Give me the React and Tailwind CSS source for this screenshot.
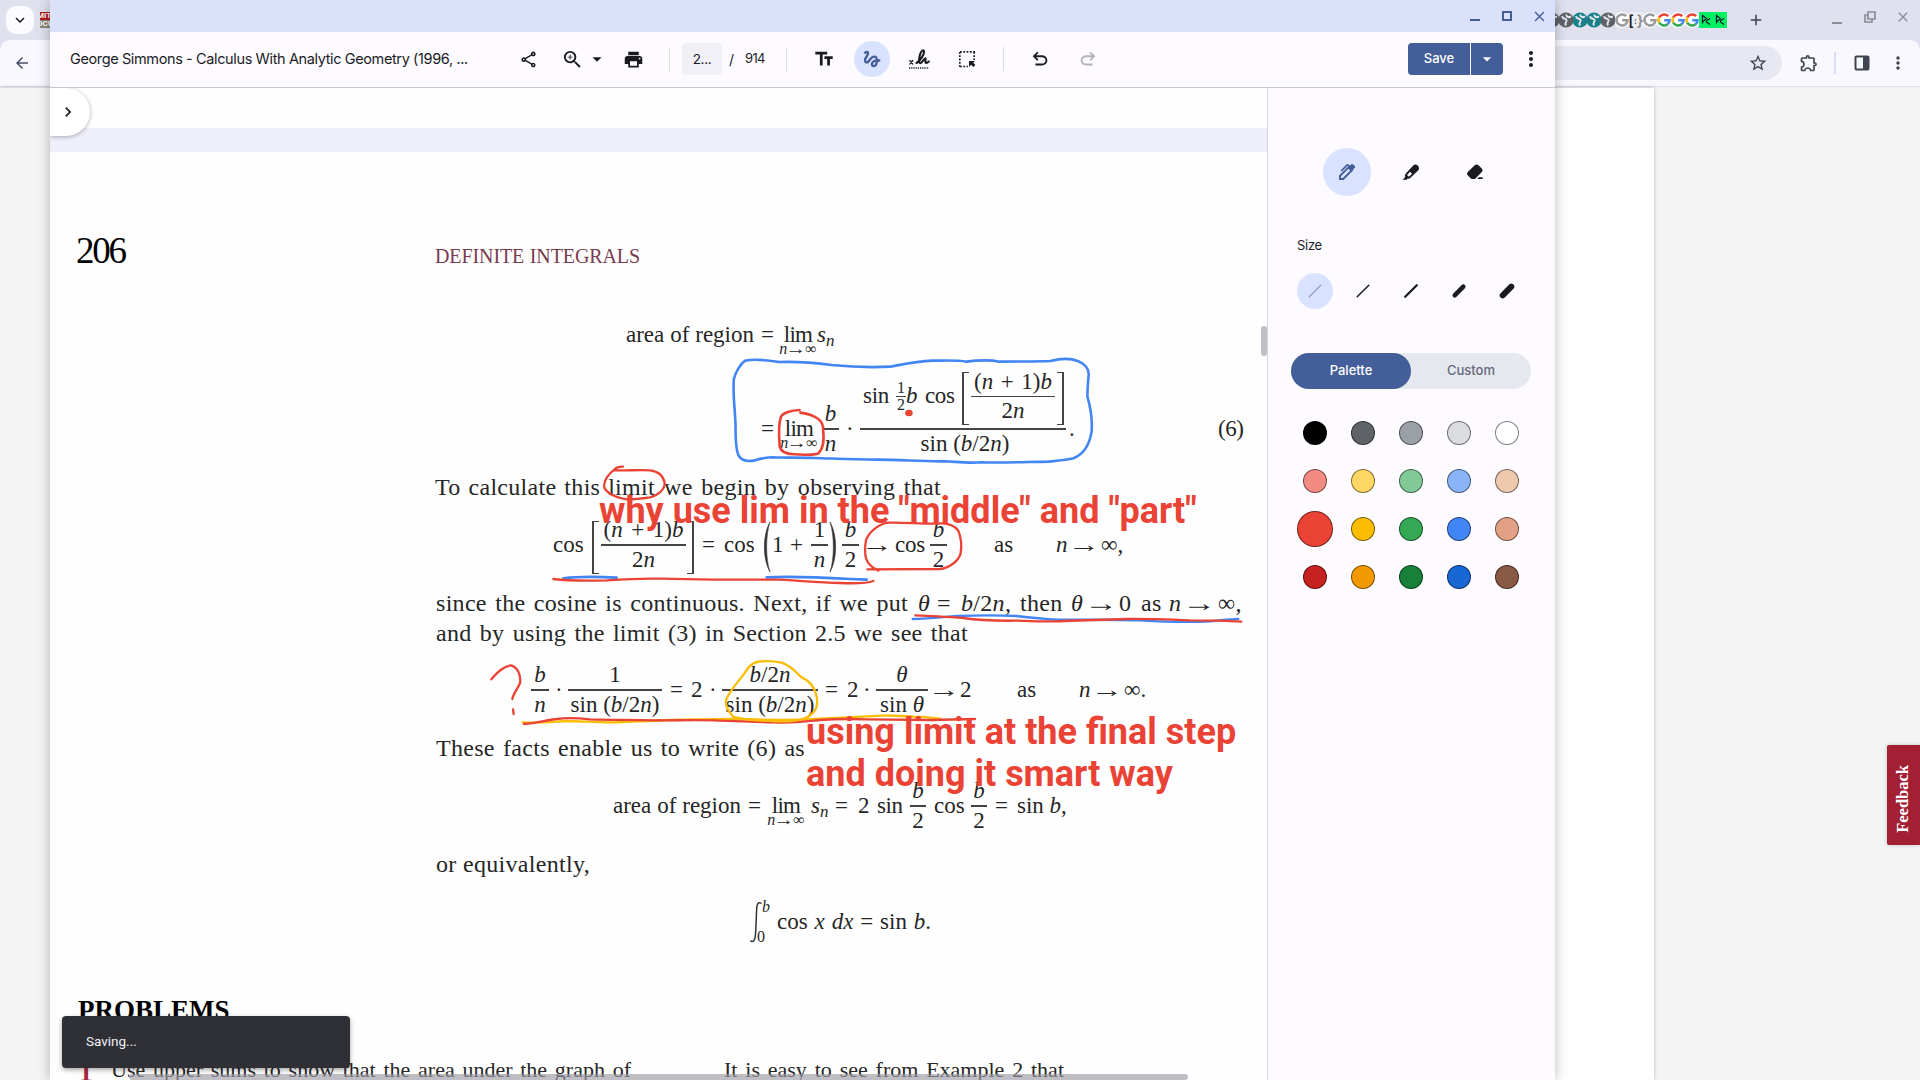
import React from "react";
import {
  MdOutlineShare, MdZoomIn, MdPrint, MdArrowDropDown, MdTextFields, MdMoreVert, MdGesture,
  MdStarBorder, MdOutlineExtension, MdArrowBack, MdAdd, MdClose, MdChevronRight, MdExpandMore,
} from "react-icons/md";

/* ---------- math typesetting helpers ---------- */
const T = ({ c = "", children }) => (
  <span className={`block shrink-0 whitespace-nowrap [text-align-last:justify] ${c}`}>{children}</span>
);
const Row = ({ c = "", children }) => <div className={`flex h-[26px] shrink-0 items-center ${c}`}>{children}</div>;
const I = ({ children }) => <i className="italic">{children}</i>;
const Arrow = ({ c = "" }) => (
  <span className={`flex w-[23px] shrink-0 justify-center tracking-normal ${c}`}><span className="block scale-x-[1.4]">→</span></span>
);
const Frac = ({ c = "", n, d, nc = "" }) => (
  <span className={`flex shrink-0 flex-col items-center whitespace-nowrap leading-[28px] ${c}`}>
    <span className={`block h-[28px] ${nc}`}>{n}</span>
    <span className="block h-[1.5px] w-full bg-[#444]" />
    <span className="block h-[28px]">{d}</span>
  </span>
);
const Lim = ({ c = "" }) => (
  <span className={`flex h-[26px] w-[28px] shrink-0 flex-col items-center whitespace-nowrap ${c}`}>
    <span className="block h-[26px] leading-[26px] tracking-[-0.8px]">lim</span>
    <span className="-mt-[7px] flex text-[16px] leading-[16px]"><I>n</I><span className="mx-[1px] block scale-x-[1.3]">→</span>∞</span>
  </span>
);
const Sn = ({ c = "" }) => (
  <T c={`w-[16px] ${c}`}><I>s</I><span className="inline-block translate-y-[4px] text-[17px] italic leading-none">n</span></T>
);
const LB = ({ c = "" }) => <span className={`block h-[53px] w-[7px] shrink-0 border-y-[1.5px] border-l-[2px] border-[#444] ${c}`} />;
const RB = ({ c = "" }) => <span className={`block h-[53px] w-[7px] shrink-0 border-y-[1.5px] border-r-[2px] border-[#444] ${c}`} />;
const Paren = ({ c = "" }) => (
  <svg className={`block h-[52px] w-[8px] shrink-0 ${c}`} viewBox="0 0 8 52"><path d="M7 1C-.5 14-.5 38 7 51C2.5 38 2.5 14 7 1Z" fill="#333" stroke="#333" strokeWidth=".6" /></svg>
);

/* ---------- icons ---------- */
const Sym = ({ d, c }) => <svg viewBox="0 -960 960 960" className={c} fill="currentColor"><path d={d} /></svg>;
const UNDO = "M280-200v-80h284q63 0 109.5-40T720-420q0-60-46.5-100T564-560H312l104 104-56 56-200-200 200-200 56 56-104 104h252q97 0 166.5 63T800-420q0 94-69.5 157T564-200H280Z";
const REDO = "M396-200q-97 0-166.5-63T160-420q0-94 69.5-157T396-640h252L544-744l56-56 200 200-200 200-56-56 104-104H396q-63 0-109.5 40T240-420q0 60 46.5 100T396-280h284v80H396Z";

const Signature = () => (
  <svg viewBox="0 0 22 20" className="h-5 w-[22px]" fill="none" stroke="#1b1b1f" strokeLinecap="round">
    <path d="M1.800 11.500l3 3.600M4.800 11.500l-3 3.600" strokeWidth="1.200" />
    <path d="M8.500 14C12 12 16.400 5.500 16 2.400C15.600.2 13 1.800 12 5.500C11 9.500 10.400 14.200 12.400 14.200C14 14.200 15.400 10.400 17.400 9.400C18 10.800 16.600 14 18.400 14C19.400 14 20 13.400 20.800 12.600" strokeWidth="2.100" />
    <path d="M1 19H21" strokeWidth="1.300" strokeLinecap="butt" strokeDasharray="1.200 1" />
  </svg>
);
const Select = () => (
  <svg viewBox="0 0 18 18" className="size-[18px]" fill="none" stroke="#1b1b1f">
    <path d="M2 1.800H17M2 16.500H10M1.800 2V17M16.200 2V10" strokeWidth="1.700" strokeDasharray="1.800 1.500" />
    <path d="M11 11H17L15.200 12.800L17.400 15L15.400 17L13 14.800L11 17Z" fill="#1b1b1f" stroke="none" />
  </svg>
);
const Pen = () => (
  <svg viewBox="0 0 18 18" className="size-[18px]" fill="none" stroke="#435e99">
    <path d="M2 16V12.800L10.800 4L14 7.200L5.200 16Z" strokeWidth="1.900" />
    <path d="M10 4.800L13.200 1.800Q14.200 1 15.300 2L16.300 3Q17.100 4 16.300 5L13.200 8Z" fill="#435e99" strokeWidth="1" />
    <path d="M3.200 8L8.700 2.300Q9.400 1.700 10.200 2.300L11.500 3.500" strokeWidth="1.700" />
  </svg>
);
const Marker = () => (
  <svg viewBox="0 0 18 18" className="size-[18px]">
    <path d="M.6 16.800L3.200 14Q2.400 12 3.800 10.500L11.500 2.300Q13.500.6 15.700 2.400Q18 4.800 16.400 7.200L8.500 14.800Q6.800 16.200 5.600 15.600L4.800 16.800Z" fill="#1b1b1f" />
    <path d="M5 11.900L8 8.800L10 10.800L7 13.800Z" fill="#fdfbff" />
  </svg>
);
const Eraser = () => (
  <svg viewBox="0 0 18 18" className="size-[18px]" fill="#1b1b1f">
    <path d="M1.500 9.200L9 2Q10.800.8 12.200 2L16 5.800Q17.400 7.400 16 8.800L9 16H5.300L1.500 12Q.3 10.600 1.500 9.200Z" />
    <path d="M11 16L13 14.200H16.600V16Z" />
  </svg>
);
const Stroke = ({ w, color }) => (
  <svg viewBox="0 0 18 18" className="size-[18px]"><path d="M3.200 14.800L14.800 3.200" stroke={color} strokeWidth={w} strokeLinecap="round" /></svg>
);
const FatStroke = ({ w }) => (
  <svg viewBox="0 0 18 18" className="size-[18px]"><path d="M4.700 13.300L13.300 4.700" stroke="#1b1b1f" strokeWidth={w} strokeLinecap="round" /></svg>
);

/* ---------- favicons ---------- */
const Fav = ({ c, children }) => <span className={`flex h-4 w-[14px] shrink-0 items-center justify-center overflow-hidden ${c}`}>{children}</span>;
const Globe = ({ color }) => (
  <svg viewBox="0 0 16 16" className="size-4 shrink-0"><circle cx="8" cy="8" r="7.600" fill={color} /><path d="M4 4.200Q4.500 6.500 7.500 7Q9.500 8 8 10Q7 11.500 8 13.500M8.500 2.500Q8 5 11 5.200L13 4.500" stroke="#e6e7ee" strokeWidth="1.900" fill="none" /></svg>
);
const G = ({ gray }) => {
  const k = gray ? ["#9a9a9a", "#9a9a9a", "#9a9a9a", "#9a9a9a"] : ["#ea4335", "#fbbc04", "#34a853", "#4285f4"];
  return (
    <svg viewBox="0 0 16 16" className="size-4 shrink-0" fill="none" strokeWidth="2.600">
      <circle cx="8" cy="8" r="8" fill="#fff" />
      <path d="M12.200 4.200A5.600 5.600 0 0 0 3.200 5.400" stroke={k[0]} /><path d="M3.200 5.400A5.600 5.600 0 0 0 3.200 10.600" stroke={k[1]} />
      <path d="M3.200 10.600A5.600 5.600 0 0 0 11.600 12.200" stroke={k[2]} /><path d="M11.600 12.200A5.600 5.600 0 0 0 13.500 8.300H8.200" stroke={k[3]} />
    </svg>
  );
};
const DC = () => (
  <Fav c="bg-[#03ef62]"><svg viewBox="0 0 14 16" className="h-4 w-[14px]" fill="none" stroke="#05192d" strokeWidth="1.200"><path d="M3.500 11.500V3.500L7.500 6.500L3.500 10M11 6.500L7.500 8.500V10L11 12.500" /></svg></Fav>
);

const SWATCHES = [
  "bg-black", "bg-[#5f6368]", "bg-[#9aa0a6]", "bg-[#dadce0]", "bg-white",
  "bg-[#f28b82]", "bg-[#fdd663]", "bg-[#81c995]", "bg-[#8ab4f8]", "bg-[#efc9ae]",
  "bg-[#ea4335]", "bg-[#fbbc04]", "bg-[#34a853]", "bg-[#4285f4]", "bg-[#e2a185]",
  "bg-[#c5221f]", "bg-[#f29900]", "bg-[#188038]", "bg-[#1967d2]", "bg-[#885945]",
];

/* ---------- hand drawn annotations ---------- */
const RED = "#ea4335", BLUE = "#4285f4", YEL = "#fbbc04";
const Ink = ({ d, s, w = 2.6 }) => <path d={d} stroke={s} strokeWidth={w} vectorEffect="non-scaling-stroke" />;
const Annotations = () => (
  <svg viewBox="50 88 1217 992" className="pointer-events-none absolute inset-0 h-[992px] w-[1217px]" fill="none" strokeLinecap="round" strokeLinejoin="round">
    <g transform="translate(600 300) scale(.4209 .3333)">
      <Ink s={BLUE} d="M345 182C335 190 322 215 318 237C315 290 322 340 322 380C322 420 324 455 330 468C336 482 350 485 365 482C380 476 395 472 412 472C440 474 470 472 510 474C560 476 600 479 660 479C720 479 760 485 820 484C860 487 880 490 905 487C960 489 1010 486 1065 485C1090 482 1110 480 1125 475C1150 462 1163 435 1168 395C1170 360 1165 320 1158 290C1158 260 1160 240 1161 225C1162 205 1150 190 1135 183C1120 175 1095 175 1070 183C1030 185 990 184 950 185C930 180 900 180 870 185C850 180 820 182 790 182C750 184 720 193 690 200C640 203 590 200 550 195C510 188 470 184 425 186C400 181 370 175 345 182" />
      <Ink s={RED} d="M474 330C455 331 435 338 430 350C423 375 425 410 427 440C430 455 440 462 460 463C480 465 500 466 518 461C532 445 533 420 530 390C532 365 515 345 476 338" />
      <ellipse cx="734" cy="339" rx="9" ry="10" fill={RED} />
    </g>
    <g transform="translate(420 460) scale(.33333)">
      <Ink s={RED} w={2.3} d="M609 20C598 20 588 22 583 29C565 42 552 62 552 78C555 98 585 112 620 118C650 118 670 115 690 112C715 106 735 88 734 68C730 48 715 34 690 31C655 28 620 33 583 31" />
      <Ink s={BLUE} d="M430 355C470 350 540 350 590 353M1040 352C1120 348 1200 352 1290 357L1340 359" />
      <Ink s={RED} w={2.3} d="M400 357C440 362 500 363 560 361C620 357 680 355 720 356C780 357 830 358 880 359C940 359 1000 358 1080 359C1140 362 1200 368 1260 369C1310 371 1345 369 1360 363" />
    </g>
    <g transform="translate(830 460) scale(.33333)">
      <Ink s={RED} w={2.3} d="M112 328C180 328 250 328 330 327C355 325 385 305 392 280C396 255 394 235 385 212C370 192 345 188 320 191C270 192 230 187 180 188C150 188 118 215 108 240C104 265 104 280 108 295C115 315 130 325 145 332" />
      <Ink s={BLUE} w={2.3} d="M248 477C300 477 330 472 380 468C450 465 520 466 560 468C600 474 640 476 680 479C750 480 850 478 930 481C1000 485 1080 487 1140 484C1170 480 1200 478 1225 477" />
      <Ink s={RED} w={2.3} d="M256 466C300 468 350 470 400 474C440 480 500 483 560 482C620 484 660 486 700 483C780 481 840 479 890 477C960 476 1020 479 1080 481C1140 481 1190 482 1234 485" />
    </g>
    <g transform="translate(420 640) scale(.33333)">
      <Ink s={RED} w={2.3} d="M214 118C230 98 250 80 272 76C292 80 304 105 300 130C292 148 280 160 277 177M279 208L281 222" />
      <Ink s={YEL} w={2.3} d="M308 247C350 250 400 245 440 243C490 244 540 248 590 247C640 244 700 242 760 240C830 238 880 238 940 237C1000 238 1060 240 1110 240C1160 238 1200 236 1280 232C1320 230 1360 228 1405 226C1430 228 1460 228 1480 230C1510 230 1530 233 1560 236" />
      <Ink s={RED} w={2.3} d="M312 252C350 250 380 240 410 237C440 233 480 235 510 238C580 240 640 239 700 241C780 241 830 240 880 241C950 243 1010 246 1060 247C1120 250 1160 244 1200 240C1240 237 1280 236 1340 238C1400 239 1460 239 1540 240C1600 238 1640 237 1665 237" />
      <Ink s={YEL} w={2.3} d="M1010 66C1035 62 1060 63 1085 68C1115 78 1130 100 1145 112C1170 122 1185 145 1190 170C1194 190 1190 210 1175 222C1160 238 1130 246 1070 244C1010 242 960 238 940 230C925 215 916 200 918 180C930 150 955 125 975 98C985 80 1000 68 1012 66" />
    </g>
  </svg>
);

const Divider = ({ c }) => <span className={`h-6 w-px shrink-0 bg-[#dcdce2] ${c}`} />;

const BookPage = () => (
  <div className="flex h-[928px] flex-col overflow-hidden bg-[#fefefe] font-['Liberation_Serif',serif] text-[23px] leading-[26px] text-[#262626]">
    <Row c="mt-[86px] pl-[26px]">
      <T c="w-[50px] text-[37px] tracking-[-2.2px] text-black">206</T>
      <T c="ml-[309px] mt-[9px] w-[205px] text-[20px] tracking-[-0.1px] text-[#793b50]">DEFINITE INTEGRALS</T>
    </Row>
    <Row c="mt-[58px] pl-[576px]">
      <T c="w-[128px]">area of region</T><T c="ml-[7px] w-[14px]">=</T><Lim c="ml-[9px]" /><Sn c="ml-[5px]" />
    </Row>
    <Row c="mt-[68px] pl-[711px]">
      <T c="w-[14px]">=</T><Lim c="ml-[10px]" />
      <Frac c="ml-[9px] w-[17px]" n={<I>b</I>} d={<I>n</I>} />
      <T c="ml-[7px] w-[6px]">·</T>
      <span className="ml-[8px] flex w-[206px] shrink-0 flex-col items-center">
        <span className="flex h-[64px] w-full items-center pl-[3px]">
          <T c="w-[27px] tracking-[-0.3px]">sin</T>
          <span className="ml-[6px] flex w-[10px] flex-col items-center text-[16px] leading-[16px]">
            <span>1</span><span className="block h-[1.5px] w-full bg-[#444]" /><span>2</span>
          </span>
          <T c="w-[11px]"><I>b</I></T>
          <T c="ml-[8px] w-[28px] tracking-[-0.4px]">cos</T>
          <LB c="ml-[9px] mt-[4px]" />
          <Frac c="ml-[2px] w-[84px]" nc="w-[78px] [text-align-last:justify]" n={<>(<I>n</I> + 1)<I>b</I></>} d={<>2<I>n</I></>} />
          <RB c="ml-[2px] mt-[4px]" />
        </span>
        <span className="block h-[1.5px] w-full bg-[#444]" />
        <span className="block h-[64px] pl-[4px] leading-[28px]">sin (<I>b</I>/2<I>n</I>)</span>
      </span>
      <T c="ml-[3px] w-[6px]">.</T>
      <T c="ml-[143px] w-[26px] tracking-[-0.5px]">(6)</T>
    </Row>
    <Row c="mt-[32px] pl-[385px] text-[24px] tracking-[.3px]">
      <T c="w-[220px]">To calculate this limit</T><T c="ml-[9px] w-[277px]">we begin by observing that</T>
    </Row>
    <Row c="mt-[32px] pl-[503px]">
      <T c="w-[31px]">cos</T><LB c="ml-[8px] mt-[4px]" />
      <Frac c="ml-[2px] w-[85px]" nc="w-[80px] [text-align-last:justify]" n={<>(<I>n</I> + 1)<I>b</I></>} d={<>2<I>n</I></>} />
      <RB c="ml-[1px] mt-[4px]" />
      <T c="ml-[8px] w-[14px]">=</T><T c="ml-[8px] w-[31px]">cos</T>
      <Paren c="ml-[8px] mt-[3px]" /><T c="ml-[1px] w-[11px]">1</T><T c="ml-[7px] w-[13px]">+</T>
      <Frac c="ml-[8px] w-[17px]" n="1" d={<I>n</I>} /><Paren c="ml-[1px] mt-[3px] -scale-x-100" />
      <Frac c="ml-[5px] w-[17px]" n={<I>b</I>} d="2" />
      <Arrow c="ml-[6px]" /><T c="ml-[7px] w-[29px] tracking-[-0.2px]">cos</T>
      <Frac c="ml-[6px] w-[17px]" n={<I>b</I>} d="2" />
      <T c="ml-[47px] w-[18px]">as</T>
      <T c="ml-[44px] w-[11px]"><I>n</I></T><Arrow c="ml-[5px]" /><T c="ml-[6px] w-[24px]">∞,</T>
    </Row>
    <Row c="mt-[32px] pl-[386px] text-[24px] tracking-[.3px]">
      <T c="w-[472px]">since the cosine is continuous. Next, if we put</T>
      <T c="ml-[10px] w-[12px]"><I>θ</I></T><T c="ml-[7px] w-[15px]">=</T><T c="ml-[9px] w-[48px]"><I>b</I>/2<I>n</I>,</T>
      <T c="ml-[11px] w-[41px]">then</T><T c="ml-[10px] w-[12px]"><I>θ</I></T><Arrow c="ml-[6px]" /><T c="ml-[7px] w-[12px]">0</T>
      <T c="ml-[10px] w-[20px]">as</T><T c="ml-[8px] w-[12px]"><I>n</I></T><Arrow c="ml-[6px]" /><T c="ml-[8px] w-[24px]">∞,</T>
    </Row>
    <Row c="mt-[4px] pl-[386px] text-[24px] tracking-[.3px]"><T c="w-[532px]">and by using the limit (3) in Section 2.5 we see that</T></Row>
    <Row c="mt-[31px] pl-[481px]">
      <Frac c="w-[18px]" n={<I>b</I>} d={<I>n</I>} /><T c="ml-[6px] w-[6px]">·</T>
      <Frac c="ml-[7px] w-[94px]" n="1" d={<>sin (<I>b</I>/2<I>n</I>)</>} />
      <T c="ml-[8px] w-[14px]">=</T><T c="ml-[7px] w-[12px]">2</T><T c="ml-[6px] w-[6px]">·</T>
      <Frac c="ml-[7px] w-[96px]" n={<><I>b</I>/2<I>n</I></>} d={<>sin (<I>b</I>/2<I>n</I>)</>} />
      <T c="ml-[7px] w-[14px]">=</T><T c="ml-[8px] w-[12px]">2</T><T c="ml-[4px] w-[6px]">·</T>
      <Frac c="ml-[7px] w-[52px]" n={<I>θ</I>} d={<>sin <I>θ</I></>} />
      <Arrow c="ml-[4px]" /><T c="ml-[5px] w-[12px]">2</T>
      <T c="ml-[45px] w-[18px]">as</T>
      <T c="ml-[44px] w-[11px]"><I>n</I></T><Arrow c="ml-[5px]" /><T c="ml-[6px] w-[24px]">∞.</T>
    </Row>
    <Row c="mt-[32px] pl-[386px] text-[24px] tracking-[.3px]"><T c="w-[369px]">These facts enable us to write (6) as</T></Row>
    <Row c="mt-[32px] pl-[563px]">
      <T c="w-[128px]">area of region</T><T c="ml-[7px] w-[14px]">=</T><Lim c="ml-[10px]" /><Sn c="ml-[11px]" />
      <T c="ml-[8px] w-[14px]">=</T><T c="ml-[9px] w-[12px]">2</T><T c="ml-[7px] w-[26px] tracking-[-0.4px]">sin</T>
      <Frac c="ml-[7px] w-[16px]" n={<I>b</I>} d="2" /><T c="ml-[8px] w-[29px]">cos</T>
      <Frac c="ml-[8px] w-[16px]" n={<I>b</I>} d="2" /><T c="ml-[8px] w-[14px]">=</T><T c="ml-[8px] w-[49px]">sin <I>b</I>,</T>
    </Row>
    <Row c="mt-[32px] pl-[386px] text-[24px] tracking-[.3px]"><T c="w-[154px]">or equivalently,</T></Row>
    <Row c="mt-[32px] pl-[700px]">
      <svg viewBox="0 0 12 42" className="h-[42px] w-[12px]" fill="none" stroke="#333" strokeWidth="1.500" strokeLinecap="round"><path d="M11 2.200Q7.600.2 6.800 6C6.200 14 6.200 28 5.200 36Q4.200 42 .9 40" /></svg>
      <span className="-ml-[5px] flex h-[46px] w-[14px] flex-col justify-between text-[16px] leading-[16px]"><span className="pl-[5px] italic">b</span><span>0</span></span>
      <T c="ml-[6px] w-[154px]">cos <I>x</I> <I>dx</I> = sin <I>b</I>.</T>
    </Row>
    <Row c="mt-[62px] pl-[28px] text-[27px] font-bold text-black"><T c="w-[152px]">PROBLEMS</T></Row>
    <Row c="mt-[34px] pl-[29px] text-[22px]">
      <T c="mt-[4px] w-[12px] text-[27px] font-bold text-[#a82a42]">1</T><T c="ml-[20px] w-[520px]">Use upper sums to show that the area under the graph of</T>
      <T c="ml-[93px] w-[340px]">It is easy to see from Example 2 that</T>
    </Row>
  </div>
);

export default function App() {
  return (
    <div className="relative h-[1080px] w-[1920px] overflow-hidden bg-[#f4f4f4] font-['Inter',sans-serif] text-[#1b1b1f]">
      {/* browser behind */}
      <div className="flex h-full flex-col">
        <div className="flex h-10 shrink-0 items-center bg-[#dfe1ee]">
          <span className="ml-[6px] flex h-7 w-7 items-center justify-center rounded-[10px] bg-[#fcfbff]"><MdExpandMore className="size-[18px]" /></span>
          <span className="ml-[6px] flex h-4 w-4 flex-col overflow-hidden font-['Roboto',sans-serif] text-[8px] font-bold leading-[8px] text-white"><span className="-ml-[3px] bg-[#b31b1b]">MIT</span><span className="-ml-[3px] bg-[#8a8578]">OCW</span></span>
          <span className="ml-[1489px] flex h-4">
            <Fav><Globe color="#5f6368" /></Fav><Fav><Globe color="#5f6368" /></Fav><Fav><Globe color="#1b808a" /></Fav><Fav><Globe color="#1b808a" /></Fav><Fav><Globe color="#5f6368" /></Fav>
            <Fav><G gray /></Fav>
            <Fav c="bg-[#eceef4] text-[15px] font-semibold leading-none text-[#555]"><span className="text-[#222]">[</span><span className="text-[9px]">:</span><span className="text-[#8a8a8a]">{"}"}</span></Fav>
            <Fav><G gray /></Fav><Fav><G /></Fav><Fav><G /></Fav><Fav><G /></Fav><DC /><DC />
          </span>
          <MdAdd className="ml-[20px] size-[18px] text-[#3c3f4a]" />
          <span className="ml-auto mr-[8px] flex items-center text-[#8b8d97]">
            <span className="mt-[5px] h-[2px] w-[10px] bg-current" />
            <svg viewBox="0 0 12 12" className="ml-[22px] mr-[1px] mt-[-6px] size-3" fill="none" stroke="currentColor" strokeWidth="1.700"><path d="M4 1H11V8H4ZM4 4H1V11H8V8" /></svg>
            <MdClose className="ml-[18px] mr-[1px] mt-[-6px] size-4" />
          </span>
        </div>
        <div className="h-12 shrink-0 bg-[#dfe1ee]">
          <div className="flex h-[47px] items-center rounded-t-[10px] border-b border-[#dddfec] bg-[#f9f8fe] text-[#40444f]">
            <MdArrowBack className="ml-[13px] size-[18px] text-[#475069]" />
            <span className="ml-[40px] flex h-[34px] w-[1711px] items-center justify-end rounded-full bg-[#e8e8f2] pr-[14px]"><MdStarBorder className="size-[20px]" /></span>
            <MdOutlineExtension className="ml-[17px] size-[20px]" />
            <span className="ml-[15px] h-[22px] w-[2px] bg-[#d5defa]" />
            <svg viewBox="0 0 16 16" className="ml-[18px] size-4"><rect x="1.500" y="1.500" width="13" height="13" rx="1" fill="none" stroke="#40444f" strokeWidth="2" /><rect x="9" y="1" width="6" height="14" fill="#40444f" /></svg>
            <MdMoreVert className="ml-[18px] size-[20px]" />
          </div>
          <div className="h-px bg-[#f4f4f4]" />
        </div>
        <div className="flex flex-1 items-start">
          <div className="h-full w-[1654px] bg-white shadow-[0_0_4px_rgba(0,0,0,.25)]"><div className="h-full w-[50px] bg-[#f4f4f4]" /></div>
          <div className="ml-auto mt-[657px] flex h-[100px] w-[33px] items-center justify-center rounded-l-[2px] bg-[#a31f34] shadow-[0_0_4px_rgba(0,0,0,.2)]">
            <span className="rotate-180 pb-[8px] font-['Liberation_Serif',serif] text-[16.500px] font-bold leading-none text-white [writing-mode:vertical-rl]">Feedback</span>
          </div>
        </div>
      </div>

      {/* editor window */}
      <div className="absolute left-[50px] top-0 flex h-[1080px] w-[1505px] flex-col bg-[#fdfbff] shadow-[0_0_12px_rgba(0,0,0,.28)]">
        <div className="flex h-8 shrink-0 items-center justify-end bg-[#dce1fb] text-[#435e99]">
          <span className="mt-[7px] h-[2px] w-[10px] bg-current" />
          <span className="ml-[22px] size-[10px] border-2 border-current" />
          <MdClose className="ml-[19px] mr-[7px] size-[17px]" />
        </div>
        <div className="flex h-[56px] shrink-0 items-center border-b border-[#c9c9d0] pb-px">
          <span className="ml-[20px] w-[398px] whitespace-nowrap text-[14.500px] tracking-[-0.380px]">George Simmons - Calculus With Analytic Geometry (1996, ...</span>
          <MdOutlineShare className="ml-[51px] size-[19px]" />
          <MdZoomIn className="ml-[23px] size-[23px]" />
          <MdArrowDropDown className="ml-[2px] size-[22px]" />
          <MdPrint className="ml-[15px] size-[21px]" />
          <Divider c="ml-[25px]" />
          <span className="ml-[12px] flex h-8 w-10 items-center justify-center rounded bg-[#f1f0f7] text-[13.500px] tracking-[-0.300px]">2...</span>
          <span className="ml-[7px] text-[14px]">/</span>
          <span className="ml-[11px] w-[21px] text-[13px] tracking-[-0.700px]">914</span>
          <Divider c="ml-[20px]" />
          <MdTextFields className="ml-[26px] size-[22px]" />
          <span className="ml-[19px] flex size-9 items-center justify-center rounded-full bg-[#d9e2ff]"><MdGesture className="size-[22px] text-[#435e99]" /></span>
          <span className="ml-[18px]"><Signature /></span>
          <span className="ml-[28px]"><Select /></span>
          <Divider c="ml-[27px]" />
          <Sym d={UNDO} c="ml-[25px] size-[22px]" />
          <Sym d={REDO} c="ml-[26px] size-[22px] text-[#b3b2b8]" />
          <span className="ml-auto flex h-8 gap-px text-white">
            <span className="flex w-[62px] items-center justify-center rounded-l bg-[#435e99] text-[13px] font-medium">Save</span>
            <span className="flex w-[32px] items-center justify-center rounded-r bg-[#435e99]"><MdArrowDropDown className="size-5" /></span>
          </span>
          <MdMoreVert className="ml-[16px] mr-[12px] size-6" />
        </div>

        <div className="flex min-h-0 flex-1">
          <div className="relative w-[1217px] shrink-0 overflow-hidden bg-[#efeffa]">
            <div className="mb-6 h-10 bg-[#fefefe]" />
            <BookPage />
            <Annotations />
            <div className="absolute left-[549px] top-[402px] whitespace-nowrap font-['Roboto',sans-serif] text-[36px] font-bold leading-[42px] text-[#ea4335]">why use lim in the "middle" and "part"</div>
            <div className="absolute left-[756px] top-[623px] whitespace-nowrap font-['Roboto',sans-serif] text-[36px] font-bold leading-[42px] text-[#ea4335]">using limit at the final step<br />and doing it smart way</div>
            <div className="absolute left-0 top-0 flex h-12 w-10 items-center rounded-r-full bg-white pl-[8px] shadow-[0_1px_4px_rgba(0,0,0,.3)]"><MdChevronRight className="size-5" /></div>
            <div className="absolute right-0 top-[238px] h-[30px] w-[6px] rounded-full bg-[#bfbec5]" />
            <div className="absolute bottom-0 left-[79px] h-[6px] w-[1059px] rounded-full bg-[#9d9ba6]/65" />
            <div className="absolute bottom-[12px] left-[12px] flex h-[52px] w-[288px] items-center rounded bg-[#2f3036] pb-px pl-6 font-['Roboto',sans-serif] text-[13.500px] text-[#f1f0f7] shadow-[0_2px_5px_rgba(0,0,0,.35)]">Saving...</div>
          </div>

          <div className="flex flex-1 flex-col border-l border-[#d5d5dc] pl-[23px] pt-[60px]">
            <div className="flex gap-4 pl-[32px]">
              <span className="flex size-12 items-center justify-center rounded-full bg-[#d9e2ff]"><Pen /></span>
              <span className="flex size-12 items-center justify-center"><Marker /></span>
              <span className="flex size-12 items-center justify-center"><Eraser /></span>
            </div>
            <div className="mt-[39px] pl-[6px] text-[13px] leading-[20px] tracking-[-0.300px]">Size</div>
            <div className="mt-[18px] flex gap-3 pl-[6px]">
              <span className="flex size-9 items-center justify-center rounded-full bg-[#d9e2ff]"><Stroke w={1.2} color="#7f95c8" /></span>
              <span className="flex size-9 items-center justify-center"><Stroke w={1.5} color="#1b1b1f" /></span>
              <span className="flex size-9 items-center justify-center"><Stroke w={2.3} color="#1b1b1f" /></span>
              <span className="flex size-9 items-center justify-center"><FatStroke w={4.5} /></span>
              <span className="flex size-9 items-center justify-center"><FatStroke w={6} /></span>
            </div>
            <div className="mt-[44px] flex h-9 w-[240px] rounded-full bg-[#e6e8f0] text-[13px] font-medium">
              <span className="flex w-[120px] items-center justify-center rounded-full bg-[#435e99] text-white">Palette</span>
              <span className="flex w-[120px] items-center justify-center text-[#646a7c]">Custom</span>
            </div>
            <div className="mt-5 grid w-[240px] grid-cols-5">
              {SWATCHES.map((s, i) => (
                <span key={s} className="flex h-12 items-center justify-center">
                  <span className={`${i === 10 ? "size-9" : "size-6"} rounded-full border border-black/50 ${s}`} />
                </span>
              ))}
            </div>
          </div>
        </div>
      </div>
    </div>
  );
}
